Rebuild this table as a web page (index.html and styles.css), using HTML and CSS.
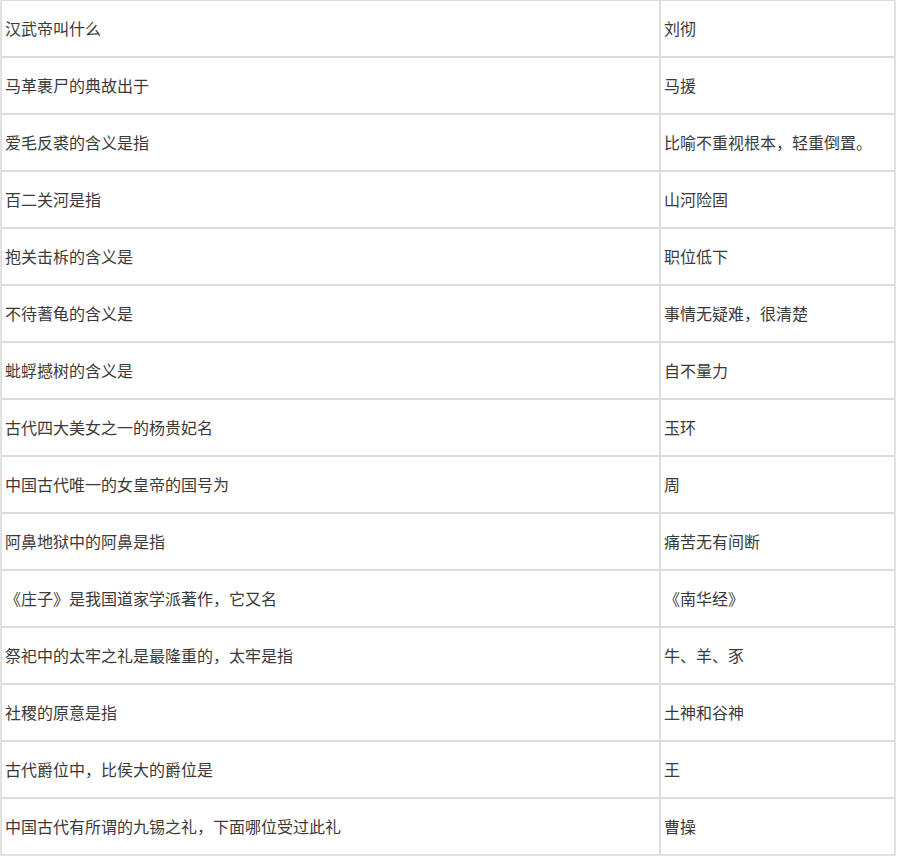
FILE: index.html
```html
<!DOCTYPE html>
<html lang="zh-CN">
<head>
<meta charset="utf-8">
<title>文化常识</title>
<link rel="stylesheet" href="styles.css">
</head>
<body>
<table class="qa">
  <tbody>
    <tr><td class="q">汉武帝叫什么</td><td class="a">刘彻</td></tr>
    <tr><td class="q">马革裹尸的典故出于</td><td class="a">马援</td></tr>
    <tr><td class="q">爱毛反裘的含义是指</td><td class="a">比喻不重视根本，轻重倒置。</td></tr>
    <tr><td class="q">百二关河是指</td><td class="a">山河险固</td></tr>
    <tr><td class="q">抱关击柝的含义是</td><td class="a">职位低下</td></tr>
    <tr><td class="q">不待蓍龟的含义是</td><td class="a">事情无疑难，很清楚</td></tr>
    <tr><td class="q">蚍蜉撼树的含义是</td><td class="a">自不量力</td></tr>
    <tr><td class="q">古代四大美女之一的杨贵妃名</td><td class="a">玉环</td></tr>
    <tr><td class="q">中国古代唯一的女皇帝的国号为</td><td class="a">周</td></tr>
    <tr><td class="q">阿鼻地狱中的阿鼻是指</td><td class="a">痛苦无有间断</td></tr>
    <tr><td class="q">《庄子》是我国道家学派著作，它又名</td><td class="a">《南华经》</td></tr>
    <tr><td class="q">祭祀中的太牢之礼是最隆重的，太牢是指</td><td class="a">牛、羊、豕</td></tr>
    <tr><td class="q">社稷的原意是指</td><td class="a">土神和谷神</td></tr>
    <tr><td class="q">古代爵位中，比侯大的爵位是</td><td class="a">王</td></tr>
    <tr><td class="q">中国古代有所谓的九锡之礼，下面哪位受过此礼</td><td class="a">曹操</td></tr>
  </tbody>
</table>
</body>
</html>
```

FILE: styles.css
```css
html, body {
  margin: 0;
  padding: 0;
  background: #ffffff;
}

body {
  font-family: "Microsoft YaHei", "Noto Sans CJK SC", "Noto Sans", sans-serif;
  font-size: 16px;
  color: #3a3a3a;
}

.qa {
  border-collapse: separate;
  border-spacing: 0;
  border: 1px solid #e4e4e4;
  border-top: 0;
  width: 896px;
  table-layout: fixed;
}

.qa td {
  height: 57px;
  padding: 0 4px 1px 3px;
  box-sizing: border-box;
  border: 1px solid #dcdcdc;
  vertical-align: middle;
  line-height: 24px;
  white-space: nowrap;
}

.qa td.q {
  width: 659px;
}

.qa td.a {
  width: auto;
}
```
